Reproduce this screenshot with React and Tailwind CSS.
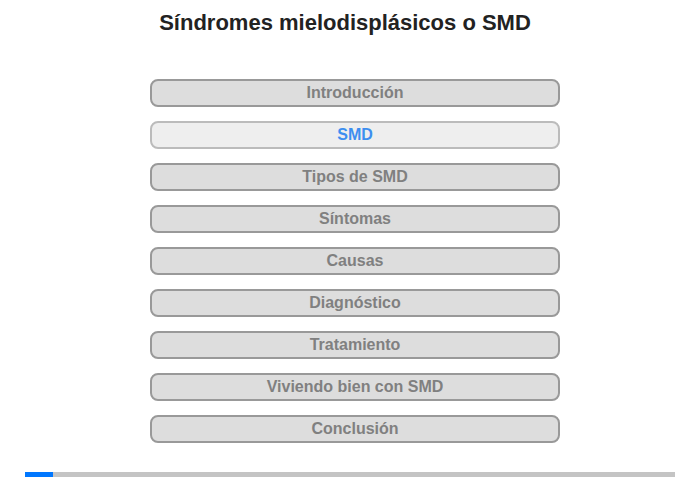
import React from "react";

const sections = [
  "Introducción",
  "SMD",
  "Tipos de SMD",
  "Síntomas",
  "Causas",
  "Diagnóstico",
  "Tratamiento",
  "Viviendo bien con SMD",
  "Conclusión",
];

const App = () => {
  const active = 1;

  return (
    <div className="w-[700px] h-[480px] bg-white font-['Liberation_Sans',Arial,sans-serif] flex flex-col">
      {/* Title */}
      <h1 className="text-center text-[22px] font-bold text-[#222] pt-[9px] pr-[10px] leading-[28px]">
        Síndromes mielodisplásicos o SMD
      </h1>

      {/* Menu */}
      <div className="flex flex-col items-center gap-[14px] mt-[42px] pl-[10px]">
        {sections.map((label, i) => (
          <button
            key={label}
            className={
              i === active
                ? "w-[410px] h-[28px] rounded-[8px] border-2 border-[#bbbbbb] bg-[#eeeeee] text-[#3d8ef0] text-[16px] font-bold leading-none"
                : "w-[410px] h-[28px] rounded-[8px] border-2 border-[#999999] bg-[#dddddd] text-[#808080] text-[16px] font-bold leading-none"
            }
          >
            {label}
          </button>
        ))}
      </div>

      {/* Progress */}
      <div className="mt-auto mb-[3px] mx-[25px] h-[5px] bg-[#c4c4c4] flex">
        <div className="w-[28px] bg-[#0077ff]" />
      </div>
    </div>
  );
};

export default App;
